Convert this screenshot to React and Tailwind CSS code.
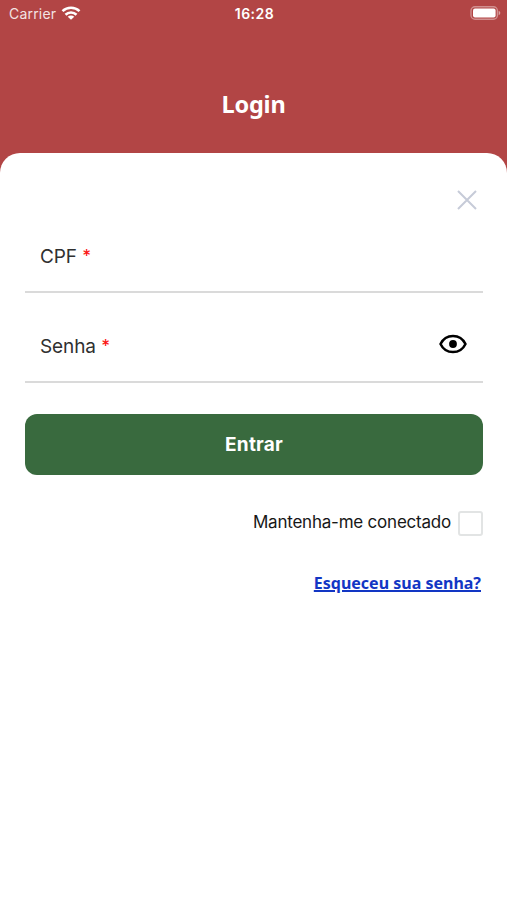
import React, { useState } from 'react';

const StatusBar = () => (
  <div className="grid h-[27px] grid-cols-3 items-center pl-[9px] pr-[6px] text-[14px] text-white">
    <div className="flex items-center gap-[5px]">
      <span className="tracking-[0.2px] opacity-85">Carrier</span>
      <svg className="-mt-px h-[14px] w-5" viewBox="0 0 19 14" fill="none" stroke="white" strokeWidth="2.6">
        <path d="M1 5.1C5.8 0.7 13.2 0.7 18 5.1" />
        <path d="M4 8.7C7.1 5.7 11.9 5.7 15 8.7" />
        <path d="M9.5 13.8L6.2 10.8C8.1 9.1 10.9 9.1 12.8 10.8Z" fill="white" stroke="none" />
      </svg>
    </div>
    <span className="-ml-px text-center font-semibold tracking-[0.5px]">16:28</span>
    <svg className="-mt-px h-[14px] w-[31px] justify-self-end" viewBox="0 0 31 14" fill="none">
      <rect x="1" y="0.8" width="26.4" height="12.4" rx="4" stroke="white" strokeOpacity="0.4" strokeWidth="1.4" />
      <rect x="3" y="2.5" width="22.6" height="9" rx="2" fill="white" />
      <path d="M28.7 4.8C30.8 5.6 30.8 8.4 28.7 9.2Z" fill="white" fillOpacity="0.5" />
    </svg>
  </div>
);

const Field = ({ label, name, type = "text", children }) => (
  <div className="flex h-[90px] items-center border-b-2 border-[#dadada] pl-[15px] pr-4 pt-[21px]">
    <label htmlFor={name} className="whitespace-nowrap text-[19px] tracking-[-0.1px] text-[#303030]">
      {label} <span className="align-[1px] text-[17px] leading-none font-medium text-[#fb1717]">*</span>
    </label>
    <input id={name} name={name} type={type} className="min-w-0 flex-1 bg-transparent px-2 text-lg outline-none" />
    {children}
  </div>
);

const App = () => {
  const [showPassword, setShowPassword] = useState(false);

  return (
    <div className="flex min-h-screen flex-col bg-[#b24545] font-['Inter',sans-serif]">
      <StatusBar />
      <h1 className="flex h-[126px] items-center justify-center pt-[29px] font-['Noto_Sans',sans-serif] text-[23.5px] font-bold tracking-[-0.2px] text-white">
        Login
      </h1>

      <main className="flex flex-1 flex-col rounded-t-[20px] bg-white pl-[25px] pr-6 pt-[37px]">
        <button type="button" aria-label="Fechar" className="mr-[6px] self-end">
          <svg className="h-5 w-5" viewBox="0 0 20 20" fill="none" stroke="#c6cbd8" strokeWidth="2">
            <path d="M1 1L19 19M19 1L1 19" />
          </svg>
        </button>

        <form className="flex flex-col" onSubmit={(e) => e.preventDefault()}>
          <div className="-mt-[7px]">
            <Field label="CPF" name="cpf" />
            <Field label="Senha" name="senha" type={showPassword ? "text" : "password"}>
              <button type="button" aria-label="Mostrar senha" className="mb-[7px]" onClick={() => setShowPassword(!showPassword)}>
                <svg className="h-5 w-[28px]" viewBox="0 0 28 20" fill="none">
                  <path
                    d="M1.5 10C4 4.8 8.6 1.9 14 1.9S24 4.8 26.5 10C24 15.2 19.4 18.1 14 18.1S4 15.2 1.5 10Z"
                    stroke="black"
                    strokeWidth="2.5"
                    strokeLinejoin="round"
                  />
                  <circle cx="14" cy="10" r="3.9" fill="black" />
                </svg>
              </button>
            </Field>
          </div>

          <button type="submit" className="mt-[31px] h-[61px] rounded-xl bg-[#396a3e] pt-px text-[19px] font-bold tracking-[0.2px] text-white">
            Entrar
          </button>

          <label className="mt-[36px] flex h-[25px] items-center justify-end gap-[7px] text-[17px] tracking-[-0.22px] text-[#171717]">
            <span className="pb-[2px]">Mantenha-me conectado</span>
            <input type="checkbox" className="h-[25px] w-[25px] appearance-none rounded-[3px] border-2 border-[#e2e4e4]" />
          </label>

          <a
            href="#"
            className="mr-[2px] mt-[35px] self-end font-['Noto_Sans',sans-serif] text-[16px] font-bold text-[#1236c4] underline decoration-2 underline-offset-1"
          >
            Esqueceu sua senha?
          </a>
        </form>
      </main>
    </div>
  );
};

export default App;
